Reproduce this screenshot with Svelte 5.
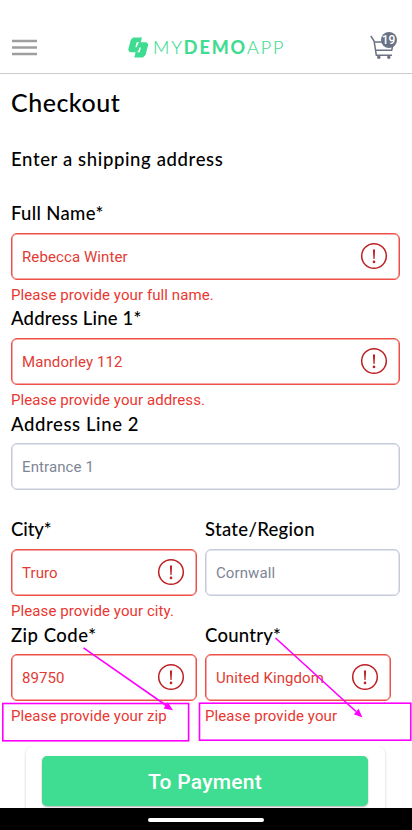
<script>
  const rows = [
    [{ label: 'Full Name*', value: 'Rebecca Winter', error: 'Please provide your full name.', width: 389, ls: 0.33 }],
    [{ label: 'Address Line 1*', value: 'Mandorley 112', error: 'Please provide your address.', width: 389, ls: 0.2 }],
    [{ label: 'Address Line 2', value: 'Entrance 1', width: 389, ls: 0.6 }],
    [
      { label: 'City*', value: 'Truro', error: 'Please provide your city.', width: 186, ls: -0.1 },
      { label: 'State/Region', value: 'Cornwall', width: 195, ls: 0.3 }
    ],
    [
      { label: 'Zip Code*', value: '89750', error: 'Please provide your zip', width: 186, ls: 0.5 },
      { label: 'Country*', value: 'United Kingdom', error: 'Please provide your', width: 186, ls: 0.25 }
    ]
  ];
</script>

<div class="screen">
  <header>
    <svg class="menu" width="25" height="18" viewBox="0 0 25 18">
      <path d="M0 2H25M0 8.5H25M0 15H25" stroke="#9e9e9e" stroke-width="2.7" />
    </svg>
    <div class="brand">
      <svg width="21" height="21" viewBox="0 0 21 21">
        <path fill="#3ddc91" d="M5.2 .5H14L12.7 5.3H8.6L7.4 10.2H8.8L9.8 7.3L11.2 5.3H18.5L20.3 7.3L17.6 17.8L15 20.4H6.3L7.6 15.3H11.7L12.9 10.4H11.5L10.4 13.7L9 15.3H1.8L.2 13L2.8 2.8Z" />
      </svg>
      <div class="name">MY<b>DEMO</b>APP</div>
    </div>
    <div class="cart">
      <svg width="28" height="28" viewBox="0 0 28 28" fill="none" stroke="#6a7285" stroke-width="1.5">
        <path d="M.8 4L4.1 9L6.3 23.2H22M4.2 10H23.5L21.7 18.3H5.8" />
        <circle cx="8.8" cy="25.2" r="1" fill="#6a7285" /><circle cx="18.8" cy="25.2" r="1" fill="#6a7285" />
      </svg>
      <span class="badge">19</span>
    </div>
  </header>

  <main>
    <h1>Checkout</h1>
    <h2>Enter a shipping address</h2>
    {#each rows as row}
      <div class="row">
        {#each row as f}
          <div class="field">
            <div class="label" style="letter-spacing: {f.ls}px">{f.label}</div>
            <div class="box" class:invalid={f.error} style="width: {f.width}px">
              <span>{f.value}</span>
              {#if f.error}
                <svg width="28" height="28" viewBox="0 0 28 28">
                  <circle cx="14" cy="14" r="12.3" fill="none" stroke="#bd2024" stroke-width="1.5" />
                  <path d="M12.9 7.4H15.1L14.6 16.9H13.4Z" fill="#bd2024" />
                  <circle cx="14" cy="19.9" r="1.3" fill="#bd2024" />
                </svg>
              {/if}
            </div>
            {#if f.error}<div class="error">{f.error}</div>{/if}
          </div>
        {/each}
      </div>
    {/each}
  </main>

  <div class="footer">
    <div class="card"><button>To Payment</button></div>
  </div>
  <div class="nav"><i></i></div>

  <svg class="marks" width="412" height="830" viewBox="0 0 412 830" fill="none" stroke="#ff00ff" stroke-width="1.6">
    <rect x="2.8" y="703.5" width="185.8" height="37.3" />
    <rect x="199.5" y="703.2" width="211.3" height="37" />
    <path d="M83.5 647.8L167 706M275.5 638L356 711.5" />
    <path d="M173 710.3L163.5 708.4L167.8 702.2Z M362.4 717.5L353.9 714.2L358.6 708.8Z" fill="#ff00ff" stroke="none" />
  </svg>
</div>

<style>
  :global(body) { margin: 0; }
  .screen { position: relative; width: 412px; height: 830px; overflow: hidden; background: #fff; display: flex; flex-direction: column; font-family: Roboto, sans-serif; }
  .screen * { box-sizing: border-box; }
  header { height: 74px; flex: none; border-bottom: 1px solid #cacaca; display: flex; align-items: flex-start; }
  .menu { margin: 39px 0 0 11.5px; }
  .brand { display: flex; margin: 37px 0 0 91px; width: 242px; }
  .name { font: 300 18px/21px Lato, sans-serif; letter-spacing: 1.9px; color: #3ddc91; margin-left: 4.5px; white-space: nowrap; -webkit-text-stroke: .15px #3ddc91; }
  .name b { font-weight: 700; }
  .cart { position: relative; width: 28px; height: 28px; margin-top: 32px; }
  .badge { position: absolute; left: 11px; top: 0; width: 16px; height: 16px; border-radius: 50%; background: #6a7285; color: #fff; font: 500 12px/16px Roboto, sans-serif; text-align: center; }
  main { height: 672px; flex: none; padding-left: 11px; color: #000; }
  h1 { font: 500 25px/30px Lato, sans-serif; margin: 13px 0 0; letter-spacing: .5px; }
  h2 { font: 500 18.5px/24px Lato, sans-serif; margin: 30px 0 28px; letter-spacing: .63px; }
  .row { display: flex; height: 105.4px; gap: 8px; }
  .row .field:first-child { flex: none; min-width: 186px; }
  .label { font: 500 18.5px/24px Lato, sans-serif; margin: 2px 0 7.5px; white-space: nowrap; height: 24px; }
  .box { height: 47px; border: 1px solid #c6cbda; box-shadow: inset 0 0 0 .5px #c6cbda; border-radius: 6px; display: flex; align-items: center; justify-content: space-between; padding: 1px 11px 0 10px; font-size: 15px; color: #7e8596; letter-spacing: .1px; }
  .box.invalid { border-color: #ee5048; box-shadow: inset 0 0 0 .5px #ee5048; color: #e23b34; }
  .box svg { margin: -2px 0 0; }
  .error { font-size: 15px; line-height: 20px; margin: 5px 0 0; color: #e93731; letter-spacing: .09px; white-space: nowrap; }
  .footer { height: 62px; flex: none; overflow: hidden; display: flex; justify-content: center; }
  .card { width: 359px; height: 80px; border-radius: 8px; box-shadow: 0 1px 3px rgba(0,0,0,.2); margin-right: 1px; padding: 10px 16px; }
  button { display: block; width: 326px; height: 50px; border: 0; border-radius: 5px; background: #3fdd92; color: #fff; font: 500 21px/53px Roboto, sans-serif; letter-spacing: .25px; padding: 0; box-shadow: 0 1px 2px rgba(0,0,0,.3); }
  .nav { height: 22px; flex: none; background: #000; display: flex; justify-content: center; padding: 10px 1px 0 0; }
  .nav i { width: 116px; height: 4px; border-radius: 2px; background: #fff; }
  .marks { position: absolute; left: 0; top: 0; }
</style>
